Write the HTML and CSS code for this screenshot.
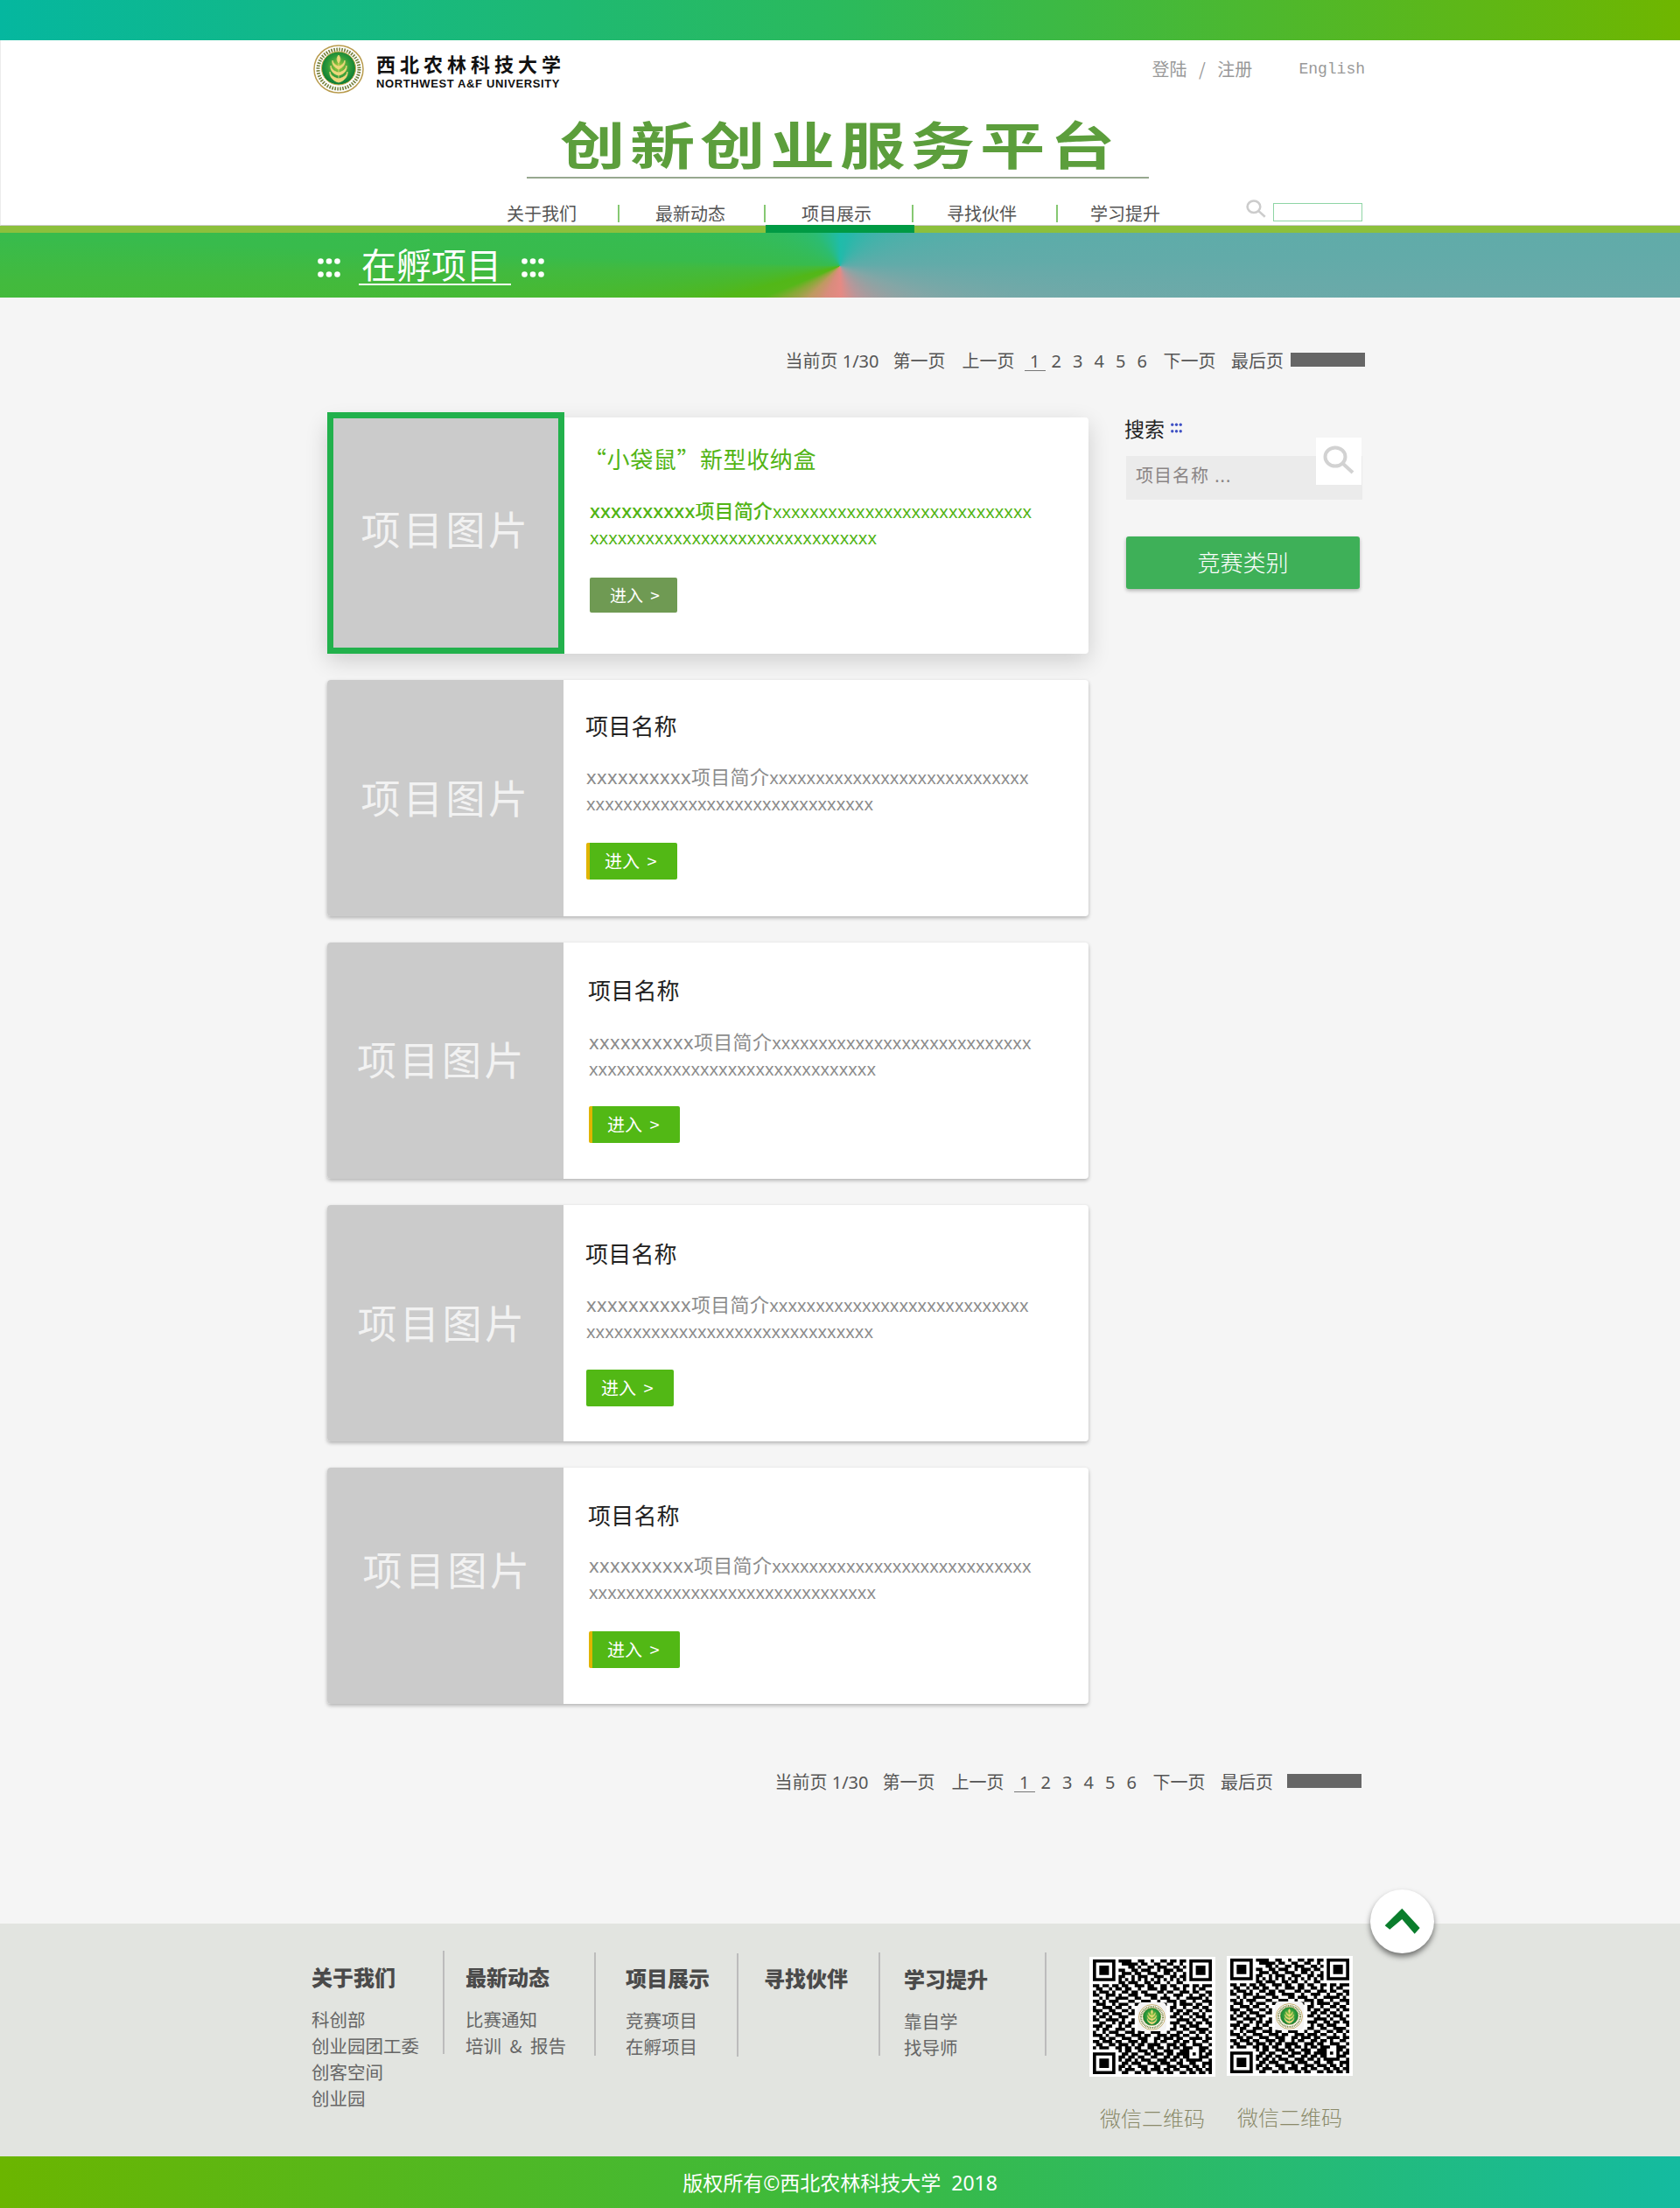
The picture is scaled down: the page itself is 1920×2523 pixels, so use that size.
FILE: index.html
```html
<!DOCTYPE html>
<html lang="zh-CN">
<head>
<meta charset="utf-8">
<title>在孵项目 - 创新创业服务平台</title>
<link rel="stylesheet" href="styles.css">
</head>
<body>
<svg class="defs" width="0" height="0" aria-hidden="true">
  <defs>
    <radialGradient id="emblem-green" cx="50%" cy="45%" r="55%">
      <stop offset="0" stop-color="#a6cf3c"/>
      <stop offset=".6" stop-color="#2e9a3a"/>
      <stop offset="1" stop-color="#0b7a36"/>
    </radialGradient>
    <symbol id="emblem" viewBox="0 0 58 56">
      <ellipse cx="29" cy="28" rx="28" ry="27" fill="#fff" stroke="#b99c4e" stroke-width="1.5"/>
      <ellipse cx="29" cy="28" rx="23.5" ry="22.5" fill="none" stroke="#76803c" stroke-width="4" stroke-dasharray="1.6 1.4"/>
      <ellipse cx="29" cy="27" rx="19.5" ry="19" fill="url(#emblem-green)" stroke="#d2b04c"/>
      <path d="M29 12c2.5 3 2.5 6 0 9-2.500-3-2.500-6 0-9zM29 42V18M29 25c3-1 6-3 7-7 1 4-2 8-7 10zM29 25c-3-1-6-3-7-7-1 4 2 8 7 10zM29 32c4-1 8-3 9-8 1 5-3 10-9 11zM29 32c-4-1-8-3-9-8-1 5 3 10 9 11zM29 39c4-1 9-3 10-8 1 5-4 11-10 12zM29 39c-4-1-9-3-10-8-1 5 4 11 10 12z" fill="#efd77c" stroke="#efd77c" stroke-width=".8"/>
    </symbol>
    <symbol id="dots" viewBox="0 0 26 22">
      <circle cx="3.500" cy="3.500" r="3.300"/><circle cx="13" cy="3.500" r="3.300"/><circle cx="22.500" cy="3.500" r="3.300"/>
      <circle cx="3.500" cy="18.500" r="3.300"/><circle cx="13" cy="18.500" r="3.300"/><circle cx="22.500" cy="18.500" r="3.300"/>
    </symbol>
    <symbol id="glass" viewBox="0 0 36 33">
      <ellipse cx="14" cy="13" rx="11.500" ry="10.500" fill="none" stroke="currentColor" stroke-width="4"/>
      <path d="M23 21l11 10" fill="none" stroke="currentColor" stroke-width="4"/>
    </symbol>
  </defs>
</svg>

<div class="topbar"></div>

<header class="header">
  <div class="header-top">
    <svg class="logo"><use href="#emblem"/></svg>
    <div class="brand">
      <div class="brand-cn">西北农林科技大学</div>
      <div class="brand-en">NORTHWEST A&amp;F UNIVERSITY</div>
    </div>
    <div class="account">
      <a class="account-link">登陆 / 注册</a>
      <a class="account-lang">English</a>
    </div>
  </div>
  <div class="site-title"><h1>创新创业服务平台</h1></div>
  <nav class="nav">
    <a class="nav-item">关于我们</a>
    <a class="nav-item">最新动态</a>
    <a class="nav-item">项目展示</a>
    <a class="nav-item">寻找伙伴</a>
    <a class="nav-item nav-item--last">学习提升</a>
    <svg class="nav-glass"><use href="#glass"/></svg>
    <input class="nav-input" type="text" aria-label="搜索">
  </nav>
</header>
<div class="strip"><div class="strip-active"></div></div>

<section class="banner">
  <svg class="banner-dots"><use href="#dots"/></svg>
  <h2 class="banner-title">在孵项目</h2>
  <svg class="banner-dots banner-dots--end"><use href="#dots"/></svg>
</section>

<main class="main">
  <div class="pager">
    <span class="pager-text">当前页 1/30</span>
    <span class="pager-text">第一页</span>
    <span class="pager-text">上一页</span>
    <span class="pager-nums"><b class="num num--on">1</b><b class="num">2</b><b class="num">3</b><b class="num">4</b><b class="num">5</b><b class="num">6</b></span>
    <span class="pager-text">下一页</span>
    <span class="pager-text">最后页</span>
    <span class="pager-box"></span>
  </div>

  <div class="content">
    <div class="cards">
      <article class="card card--active">
        <div class="thumb"><span>项目图片</span></div>
        <div class="card-body">
          <h3 class="card-title">“小袋鼠”新型收纳盒</h3>
          <p class="desc"><span class="lead">xxxxxxxxxx项目简介</span>xxxxxxxxxxxxxxxxxxxxxxxxxxxx<br>xxxxxxxxxxxxxxxxxxxxxxxxxxxxxxx</p>
          <a class="btn">进入 &gt;</a>
        </div>
      </article>
      <article class="card card--b">
        <div class="thumb"><span>项目图片</span></div>
        <div class="card-body">
          <h3 class="card-title">项目名称</h3>
          <p class="desc"><span class="lead">xxxxxxxxxx项目简介</span>xxxxxxxxxxxxxxxxxxxxxxxxxxxx<br>xxxxxxxxxxxxxxxxxxxxxxxxxxxxxxx</p>
          <a class="btn btn--stripe">进入 &gt;</a>
        </div>
      </article>
      <article class="card card--c">
        <div class="thumb"><span>项目图片</span></div>
        <div class="card-body">
          <h3 class="card-title">项目名称</h3>
          <p class="desc"><span class="lead">xxxxxxxxxx项目简介</span>xxxxxxxxxxxxxxxxxxxxxxxxxxxx<br>xxxxxxxxxxxxxxxxxxxxxxxxxxxxxxx</p>
          <a class="btn btn--stripe">进入 &gt;</a>
        </div>
      </article>
      <article class="card card--d">
        <div class="thumb"><span>项目图片</span></div>
        <div class="card-body">
          <h3 class="card-title">项目名称</h3>
          <p class="desc"><span class="lead">xxxxxxxxxx项目简介</span>xxxxxxxxxxxxxxxxxxxxxxxxxxxx<br>xxxxxxxxxxxxxxxxxxxxxxxxxxxxxxx</p>
          <a class="btn">进入 &gt;</a>
        </div>
      </article>
      <article class="card card--e">
        <div class="thumb"><span>项目图片</span></div>
        <div class="card-body">
          <h3 class="card-title">项目名称</h3>
          <p class="desc"><span class="lead">xxxxxxxxxx项目简介</span>xxxxxxxxxxxxxxxxxxxxxxxxxxxx<br>xxxxxxxxxxxxxxxxxxxxxxxxxxxxxxx</p>
          <a class="btn btn--stripe">进入 &gt;</a>
        </div>
      </article>
    </div>

    <aside class="side">
      <div class="side-head">搜索 <svg class="side-dots"><use href="#dots"/></svg></div>
      <div class="side-search">
        <span class="side-placeholder">项目名称 ...</span>
        <span class="side-go"><svg class="side-glass"><use href="#glass"/></svg></span>
      </div>
      <a class="side-btn">竞赛类别</a>
    </aside>
  </div>

  <div class="pager pager--bottom">
    <span class="pager-text">当前页 1/30</span>
    <span class="pager-text">第一页</span>
    <span class="pager-text">上一页</span>
    <span class="pager-nums"><b class="num num--on">1</b><b class="num">2</b><b class="num">3</b><b class="num">4</b><b class="num">5</b><b class="num">6</b></span>
    <span class="pager-text">下一页</span>
    <span class="pager-text">最后页</span>
    <span class="pager-box"></span>
  </div>
</main>

<footer class="footer">
  <a class="to-top" aria-label="返回顶部">
    <svg class="to-top-icon" viewBox="0 0 73 73"><path d="M36.300 21.700L56.700 44l-6 6.700L36.300 34 22.300 45.700l-5.600-4.400z"/></svg>
  </a>
  <div class="footer-main">
    <div class="f-col">
      <h4 class="f-head">关于我们</h4>
      <a class="f-link">科创部</a><a class="f-link">创业园团工委</a><a class="f-link">创客空间</a><a class="f-link">创业园</a>
    </div>
    <div class="f-col">
      <h4 class="f-head">最新动态</h4>
      <a class="f-link">比赛通知</a><a class="f-link">培训 &amp; 报告</a>
    </div>
    <div class="f-col">
      <h4 class="f-head">项目展示</h4>
      <a class="f-link">竞赛项目</a><a class="f-link">在孵项目</a>
    </div>
    <div class="f-col">
      <h4 class="f-head">寻找伙伴</h4>
    </div>
    <div class="f-col">
      <h4 class="f-head">学习提升</h4>
      <a class="f-link">靠自学</a><a class="f-link">找导师</a>
    </div>
    <figure class="qr">
      <div class="qr-box">
        <svg class="qr-code" viewBox="0 0 37 37" preserveAspectRatio="none"><path/></svg>
        <span class="qr-logo"><svg class="qr-emblem"><use href="#emblem"/></svg></span>
      </div>
      <figcaption class="qr-cap">微信二维码</figcaption>
    </figure>
    <figure class="qr qr--second">
      <div class="qr-box">
        <svg class="qr-code" viewBox="0 0 37 37" preserveAspectRatio="none"><path/></svg>
        <span class="qr-logo"><svg class="qr-emblem"><use href="#emblem"/></svg></span>
      </div>
      <figcaption class="qr-cap">微信二维码</figcaption>
    </figure>
  </div>
  <div class="copyright">版权所有©西北农林科技大学&nbsp; 2018</div>
</footer>
<script src="qr.js"></script>
</body>
</html>
```

FILE: styles.css
```css
* { box-sizing: border-box; }
html, body { margin: 0; padding: 0; }
body {
  width: 1920px;
  background: #f5f5f5;
  font-family: "Noto Sans", "Noto Sans CJK SC", sans-serif;
  color: #333;
  overflow-x: hidden;
}
h1, h2, h3, h4, p, figure { margin: 0; font-weight: normal; }
.defs { position: absolute; }

.topbar {
  height: 46px;
  background: linear-gradient(90deg, #05b79f 0%, #2bba5c 50%, #6fb600 100%);
}

.header {
  height: 212px;
  background: #fff;
  border-left: 1px solid #ececec;
  border-bottom: 1px solid #ccc;
}
.header-top {
  display: flex;
  height: 62px;
  padding: 5px 360px 0 357px;
}
.logo { width: 58px; height: 56px; }
.brand { margin-left: 14px; padding-top: 6px; color: #111; }
.brand-cn {
  font: bold 22px/30px "Noto Sans CJK SC", sans-serif;
  letter-spacing: 5px;
  white-space: nowrap;
}
.brand-en {
  font: bold 13px/18px "Liberation Sans", sans-serif;
  letter-spacing: .62px;
  white-space: nowrap;
}
.account {
  margin-left: auto;
  display: flex;
  gap: 53px;
  align-items: center;
  height: 46px;
  padding-top: 8px;
  color: #999;
  font-size: 20px;
}
.account-link { white-space: pre; font-family: "Noto Sans CJK SC", sans-serif; word-spacing: 9px; }
.account-lang { padding-top: 1px; font: 18px "Liberation Mono", monospace; }

.site-title {
  width: 711px;
  margin-left: 601px;
  height: 96px;
  padding: 20px 0 0 6px;
  border-bottom: 2px solid #97a88f;
  text-align: center;
}
.site-title h1 {
  display: inline-block;
  font: bold 58px/70px "Noto Sans CJK SC", sans-serif;
  letter-spacing: 4.500px;
  color: #5c9e3c;
  transform: scaleX(1.28);
  white-space: nowrap;
}

.nav {
  display: flex;
  align-items: flex-end;
  height: 53px;
  padding: 0 0 3px 578px;
}
.nav-item {
  font: 20px/20px "Noto Sans CJK SC", sans-serif;
  color: #555;
  height: 20px;
  padding-right: 47px;
  border-right: 2px solid #86c872;
  margin-right: 41px;
  white-space: nowrap;
}
.nav-item:nth-child(2) { padding-right: 44px; }
.nav-item:nth-child(3) { margin-right: 38px; padding-right: 46px; }
.nav-item:nth-child(4) { margin-right: 37px; padding-right: 45px; }
.nav-item--last { border-right: 0; padding-right: 0; margin-right: 0; }
.nav-glass {
  width: 23px;
  height: 23px;
  margin: 0 8px 4px 98px;
  color: #ccc;
}
.nav-input {
  width: 102px;
  height: 21px;
  margin: 0 0 1px;
  padding: 0;
  border: 1px solid #8fd5a5;
  background: #fff;
}

.strip { height: 8px; background: #8cc03c; }
.strip-active {
  width: 170px;
  height: 9px;
  margin-left: 875px;
  position: relative;
  top: -1px;
  background: #009a44;
}

.banner {
  display: flex;
  align-items: flex-start;
  height: 74px;
  padding: 12px 0 0 363px;
  background: conic-gradient(from 0deg at 960px 38px,
    #1fbcaa 0deg, #25b9aa 15deg, #62aba9 89deg, #68aaa9 92deg, #84a6a6 110deg, #b8979a 150deg,
    #e58a84 178deg, #d98c7c 205deg, #be9a60 225deg, #85aa35 240deg, #55b719 248deg, #52b718 255deg, #42ba3e 269deg,
    #38bb4c 272deg, #2cbc70 320deg, #1fbcaa 360deg);
}
.banner-dots { width: 26px; height: 22px; margin-top: 17px; fill: #fff; }
.banner-dots--end { margin-left: 12px; }
.banner-title {
  margin-left: 21px;
  padding: 0 11px 0 3px;
  font: 40px/46px "Noto Sans CJK SC", sans-serif;
  color: #fff;
  border-bottom: 2px solid #fff;
  white-space: nowrap;
}

.pager {
  display: flex;
  justify-content: flex-end;
  gap: 19px;
  height: 20px;
  margin-top: 63px;
  padding-right: 360px;
  font: 20px/20px "Noto Sans", "Noto Sans CJK SC", sans-serif;
  color: #555;
}
.pager-text { white-space: nowrap; }
.pager-text:nth-child(1) { margin-right: -3px; }
.pager-text:nth-child(5) { margin-right: -1.500px; }
.pager-text:nth-child(6) { margin-left: 0; margin-right: -11px; }
.pager-nums { display: flex; margin: 0 -7px 0 -8px; }
.num { width: 24.500px; font-weight: normal; text-align: center; }
.num--on { height: 21px; border-bottom: 1px solid #777; }
.pager-box { width: 85px; height: 16px; background: #666; }
.pager--bottom { margin-top: 80px; padding-right: 364px; }
.pager--bottom .pager-text:nth-child(6) { margin-right: -3px; }

.content { display: flex; align-items: flex-start; }
.cards {
  width: 870px;
  margin: 54px 0 0 374px;
  display: flex;
  flex-direction: column;
  gap: 30px;
}
.card {
  display: flex;
  align-items: flex-end;
  height: 270px;
  background: #fff;
  border-radius: 4px;
  box-shadow: 0 2px 4px rgba(0, 0, 0, .28);
}
.thumb {
  flex: none;
  width: 270px;
  height: 270px;
  display: flex;
  align-items: center;
  justify-content: center;
  background: #cbcbcb;
  border-radius: 4px 0 0 4px;
}
.thumb span {
  font: 45px/50px "Noto Sans CJK SC", sans-serif;
  letter-spacing: 3.500px;
  color: #f2f2f2;
  white-space: nowrap;
}
.card-body { flex: 1; align-self: flex-start; min-width: 0; }
.card-title {
  margin-left: -1px;
  font: 26px/36px "Noto Sans CJK SC", sans-serif;
  color: #222;
  letter-spacing: .2px;
  white-space: nowrap;
}
.desc {
  font-size: 20px;
  line-height: 30px;
  color: #8c8c8c;
  white-space: nowrap;
}
.lead { font-size: 22px; letter-spacing: .35px; }
.btn {
  display: flex;
  align-items: center;
  width: 100px;
  height: 42px;
  padding-left: 17px;
  background: #52b815;
  border-radius: 2px;
  color: #fff;
  font: 20px/24px "Noto Sans CJK SC", sans-serif;
  white-space: pre;
  word-spacing: 4px;
}
.btn--stripe { width: 104px; border-left: 4px solid #e0b400; }

.card--active { box-shadow: 0 8px 26px rgba(0, 0, 0, .16); }
.card--active .thumb {
  width: 271px;
  height: 276px;
  border: 7px solid #22b14c;
  border-radius: 0;
}
.card--active .thumb span { margin: -10px 0 0 0; }
.card--active .card-body { padding: 29px 0 0 29px; }
.card--active .card-title { margin-left: -7px; color: #52b415; letter-spacing: .6px; }
.card--active .desc { margin-top: 26px; color: #52b415; }
.card--active .lead { font-weight: 500; letter-spacing: .1px; }
.card--active .btn { margin-top: 30px; height: 40px; padding-left: 23px; background: #6f9a53; font-size: 19px; }

.card--b .thumb span { margin: -3px 0 0 1px; }
.card--b .card-body { padding: 34px 0 0 26px; }
.card--b .desc { margin-top: 25px; }
.card--b .btn { margin-top: 29px; }

.card--c .thumb span { margin: -5px 8px 0 0; }
.card--c .card-body { padding: 36px 0 0 29px; }
.card--c .desc { margin-top: 26px; }
.card--c .btn { margin-top: 27px; }

.card--d .thumb span { margin: -3px 7px 0 0; }
.card--d .card-body { padding: 37px 0 0 26px; }
.card--d .desc { margin-top: 25px; }
.card--d .btn { margin-top: 28px; }

.card--e .thumb span { margin: -38px 0 0 5px; }
.card--e .card-body { padding: 36px 0 0 29px; }
.card--e .desc { margin-top: 24px; }
.card--e .btn { margin-top: 29px; }

.side { width: 272px; margin: 52px 0 0 41px; }
.side-head {
  display: flex;
  align-items: center;
  gap: 7px;
  height: 28px;
  font: 23px/28px "Noto Sans CJK SC", sans-serif;
  color: #222;
}
.side-dots { width: 13px; height: 12px; fill: #3f51c4; }
.side-search {
  position: relative;
  width: 270px;
  height: 50px;
  margin: 18px 0 0 2px;
  padding-left: 11px;
  background: #ebebeb;
  font: 20px/46px "Noto Sans", "Noto Sans CJK SC", sans-serif;
  color: #8a8585;
  letter-spacing: 1px;
}
.side-go {
  position: absolute;
  right: 1px;
  top: -21px;
  width: 52px;
  height: 54px;
  background: #fff;
}
.side-glass {
  position: absolute;
  left: 8px;
  top: 9px;
  width: 36px;
  height: 33px;
  color: #d2d2d2;
}
.side-btn {
  display: block;
  width: 267px;
  height: 60px;
  margin: 42px 0 0 2px;
  background: #3eb058;
  border-radius: 3px;
  box-shadow: 0 2px 4px rgba(0, 0, 0, .28);
  color: #fff;
  text-align: center;
  font: 300 26px/58px "Noto Sans CJK SC", sans-serif;
}

.footer { position: relative; margin-top: 151px; }
.to-top {
  position: absolute;
  left: 1566px;
  top: -39px;
  width: 73px;
  height: 73px;
  border-radius: 50%;
  background: #fff;
  box-shadow: 0 4px 6px rgba(0, 0, 0, .5);
}
.to-top-icon { display: block; width: 73px; height: 73px; fill: #0a7d2c; }
.footer-main {
  display: flex;
  align-items: flex-start;
  height: 266px;
  padding: 31px 0 0 356px;
  background: #e2e4e0;
}
.f-col {
  height: 118px;
  padding-left: 27px;
  border-right: 2px solid #bcbcbc;
}
.f-col:nth-child(1) { width: 152px; padding: 15px 0 0 0; }
.f-col:nth-child(2) { width: 173px; margin-top: 2px; padding: 13px 0 0 24px; }
.f-col:nth-child(3) { width: 163px; margin-top: 3px; padding: 13px 0 0 34px; }
.f-col:nth-child(4) { width: 162px; margin-top: 2px; padding: 14px 0 0 29px; }
.f-col:nth-child(5) { width: 190px; margin-top: 2px; padding: 15px 0 0 27px; }
.f-head {
  font: 900 24px/30px "Noto Sans CJK SC", sans-serif;
  color: #4a4a4a;
  margin-bottom: 18px;
  white-space: nowrap;
}
.f-link {
  display: block;
  font: 20.500px/30px "Noto Sans CJK SC", sans-serif;
  color: #666;
  white-space: pre;
  word-spacing: 5px;
}
.qr { margin: 7px 0 0 49px; width: 144px; }
.qr--second { margin: 6px 0 0 13px; }
.qr-box {
  position: relative;
  width: 144px;
  height: 137px;
  padding: 3px 4px;
  background: #fff;
}
.qr-code { display: block; width: 136px; height: 131px; fill: #000; }
.qr-logo {
  position: absolute;
  left: 55px;
  top: 52px;
  width: 33px;
  height: 33px;
  display: flex;
  align-items: center;
  justify-content: center;
  background: #f4f4f4;
  border-radius: 5px;
}
.qr-emblem { width: 31px; height: 30px; }
.qr-cap {
  margin-top: 33px;
  font: 300 24px/28px "Noto Sans CJK SC", sans-serif;
  color: #8a8a6a;
  text-align: center;
  white-space: nowrap;
}
.copyright {
  height: 59px;
  background: linear-gradient(90deg, #6bb500 0%, #3cba3e 50%, #14bba0 100%);
  color: #fff;
  text-align: center;
  font: 23px/61px "Noto Sans", "Noto Sans CJK SC", sans-serif;
}
```

FILE: qr.js
```js
var rows = [
  "11111110" + "111100110010011011011" + "01111111",
  "10000010" + "011111011001100110010" + "01000001",
  "10111010" + "000110100110111001101" + "01011101",
  "10111010" + "110011011100101110110" + "01011101",
  "10111010" + "011101100111001101001" + "01011101",
  "10000010" + "110010111001110011011" + "01000001",
  "11111110" + "101010101010101010101" + "01111111",
  "00000000" + "110111001101100100110" + "00000000",
  "11011011" + "011001110110011011001" + "10110111",
  "0110010110110010011101100110100101100",
  "1011101001101101100011011001110110011",
  "1100111010011100111100100111001001101",
  "0010100111100110001101110010011111010",
  "1101011100011001110010011101100100111",
  "0111001011100111000001100101111011001",
  "1001110110010000000000001100100110110",
  "1110011001101000000000001011011001011",
  "0101101110011000000000000110110110100",
  "1011010011100000000000001101001011101",
  "1100111101001000000000000011110100110",
  "0011001011011000000000001110011011011",
  "1110110010110000000000000101101110001",
  "0101100111001000000000001100110011110",
  "1001011100111011001110010011001101101",
  "1110100111001110110011101110110010010",
  "0011011001110011100110111011001111011",
  "1101110110011101100101100110110100110",
  "0110011011101011011110011101100111001",
  "1011100110110110011011010110111001110",
  "00000000" + "101100111011001110011" + "10001101",
  "11111110" + "011011001101110110111" + "10101011",
  "10000010" + "110110110011001101101" + "10001110",
  "10111010" + "101101011100111011010" + "11111001",
  "10111010" + "011011100111011100110" + "01100111",
  "10111010" + "110100111001100111011" + "10110101",
  "10000010" + "101110011011101101100" + "11011011",
  "11111110" + "011001101100110110011" + "01101101"
];
var d = "";
rows.forEach(function (row, y) {
  row.replace(/1+/g, function (run, x) {
    d += "M" + x + " " + y + "h" + run.length + "v1h-" + run.length + "z";
    return run;
  });
});
document.querySelectorAll(".qr-code path").forEach(function (p) {
  p.setAttribute("d", d);
});
```
